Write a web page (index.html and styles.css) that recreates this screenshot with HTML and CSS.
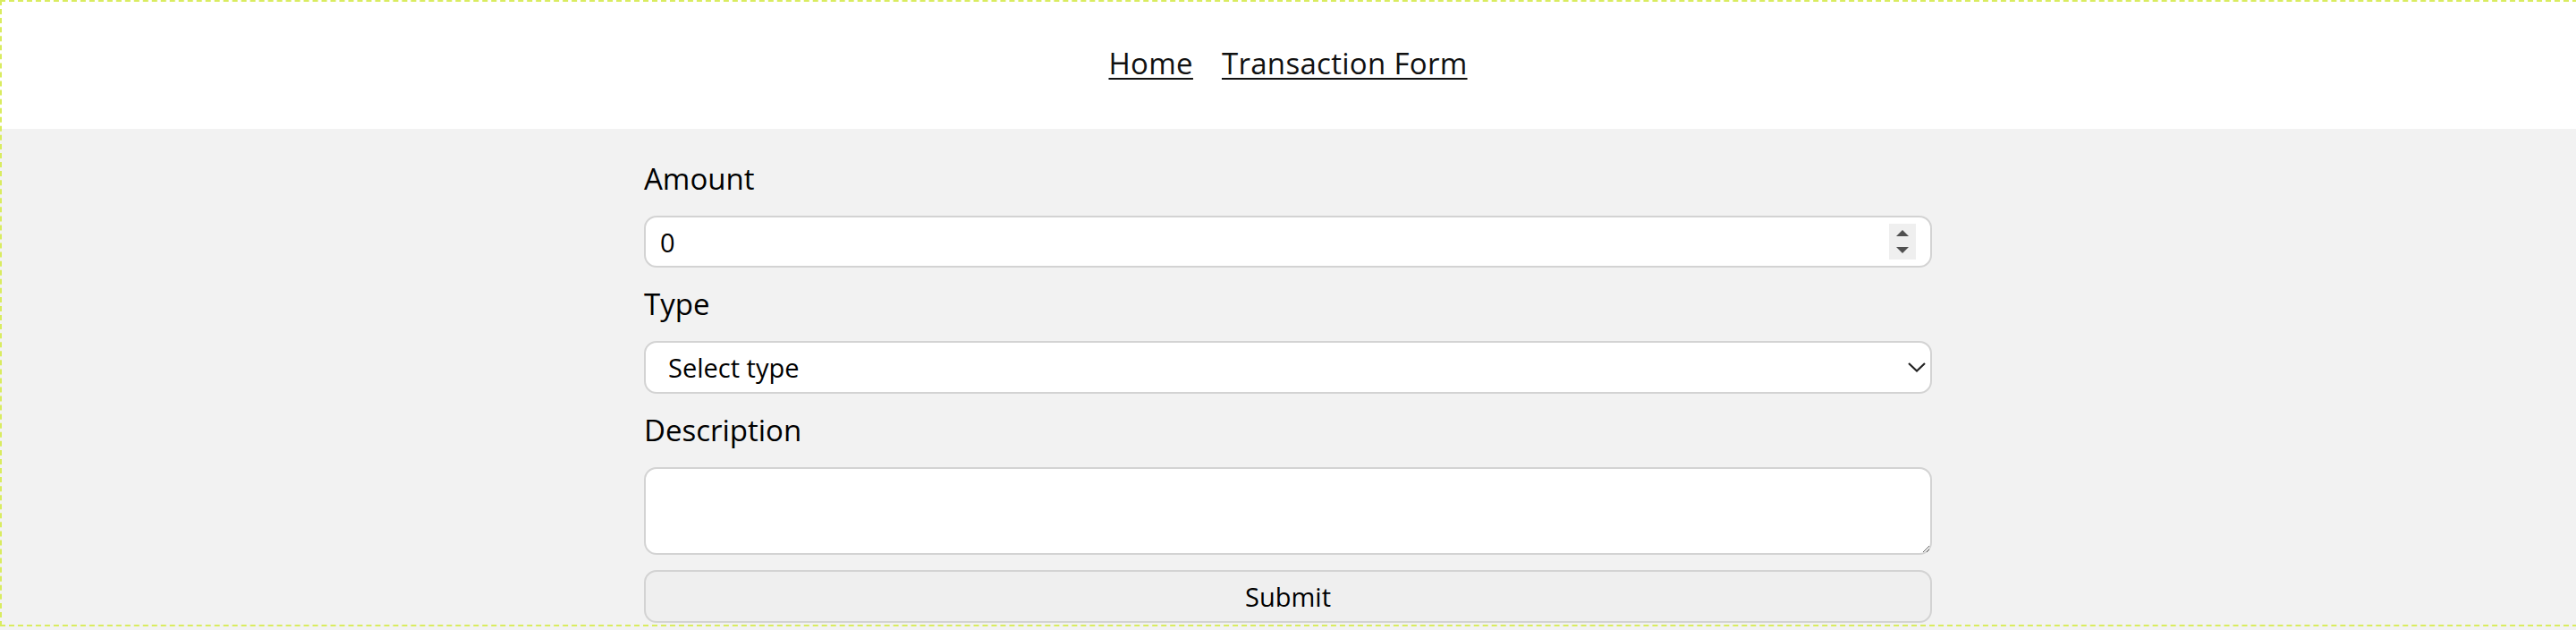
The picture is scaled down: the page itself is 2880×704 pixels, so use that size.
FILE: index.html
```html
<!DOCTYPE html>
<html lang="en">
<head>
<meta charset="utf-8">
<title>Transaction Form</title>
<link rel="stylesheet" href="styles.css">
</head>
<body>
<header class="site-header">
  <nav class="nav">
    <a class="nav-link" href="#">Home</a>
    <a class="nav-link" href="#">Transaction Form</a>
  </nav>
</header>
<main class="page">
  <form class="tx-form">
    <label class="field-label" for="amount">Amount</label>
    <div class="number-wrap">
      <input id="amount" class="control" type="number" value="0">
      <span class="spinner" aria-hidden="true">
        <svg width="30" height="40" viewBox="0 0 30 40">
          <polygon points="8,14 22,14 15,7" fill="#505050"/>
          <polygon points="8,26 22,26 15,33" fill="#505050"/>
        </svg>
      </span>
    </div>
    <label class="field-label" for="type">Type</label>
    <div class="select-wrap">
      <select id="type" class="control select">
        <option>Select type</option>
        <option>Income</option>
        <option>Expense</option>
      </select>
      <svg class="chevron" width="20" height="11" viewBox="0 0 20 11" aria-hidden="true">
        <polyline points="1,1 10,9.5 19,1" fill="none" stroke="#222" stroke-width="2.2"/>
      </svg>
    </div>
    <label class="field-label" for="desc">Description</label>
    <textarea id="desc" class="control textarea"></textarea>
    <button class="submit" type="submit">Submit</button>
  </form>
</main>
<div class="frame-outline" aria-hidden="true"></div>
</body>
</html>
```

FILE: styles.css
```css
html, body {
  margin: 0;
  padding: 0;
}

body {
  background: #f2f2f2;
  font-family: "Open Sans", "Liberation Sans", sans-serif;
  color: #000;
  min-height: 704px;
}

.site-header {
  background: #fff;
  height: 144px;
  box-sizing: border-box;
  padding-top: 48px;
}

.nav {
  display: flex;
  justify-content: center;
  gap: 32px;
  line-height: 45px;
  font-size: 33px;
}

.nav-link {
  color: #111;
  text-decoration: underline;
  text-decoration-thickness: 2px;
  text-underline-offset: 4px;
  letter-spacing: 0.3px;
}

.page {
  padding-top: 33px;
}

.tx-form {
  width: 1440px;
  margin: 0 auto;
  display: flex;
  flex-direction: column;
}

.field-label {
  display: block;
  font-size: 33px;
  line-height: 45px;
  margin-bottom: 19px;
}

.control {
  box-sizing: border-box;
  width: 100%;
  margin: 0;
  border: 2px solid #d3d3d3;
  border-radius: 14px;
  background: #fff;
  font-family: "Open Sans", "Liberation Sans", sans-serif;
  font-size: 29px;
  color: #000;
  outline: none;
}

.number-wrap,
.select-wrap {
  position: relative;
  margin-bottom: 18px;
}

.number-wrap .control {
  height: 58px;
  padding: 0 16px;
  -moz-appearance: textfield;
}

.number-wrap .control::-webkit-inner-spin-button,
.number-wrap .control::-webkit-outer-spin-button {
  -webkit-appearance: none;
  margin: 0;
}

.spinner {
  position: absolute;
  right: 18px;
  top: 9px;
  width: 30px;
  height: 40px;
  background: #efefef;
  display: block;
}

.spinner svg {
  display: block;
}

.select {
  height: 59px;
  padding: 0 25px;
  -webkit-appearance: none;
  appearance: none;
}

.chevron {
  position: absolute;
  right: 7px;
  top: 24px;
  pointer-events: none;
}

.textarea {
  height: 98px;
  padding: 12px 16px;
  resize: both;
  display: block;
  margin-bottom: 17px;
}

.submit {
  box-sizing: border-box;
  width: 100%;
  height: 59px;
  margin: 0;
  border: 2px solid #d3d3d3;
  border-radius: 14px;
  background: #efefef;
  font-family: "Open Sans", "Liberation Sans", sans-serif;
  font-size: 29px;
  color: #000;
  padding: 0;
}

.frame-outline {
  position: fixed;
  left: 0;
  top: 0;
  right: -2px;
  height: 700px;
  box-sizing: border-box;
  border: 2px dashed #d9ec5f;
  pointer-events: none;
}
```
